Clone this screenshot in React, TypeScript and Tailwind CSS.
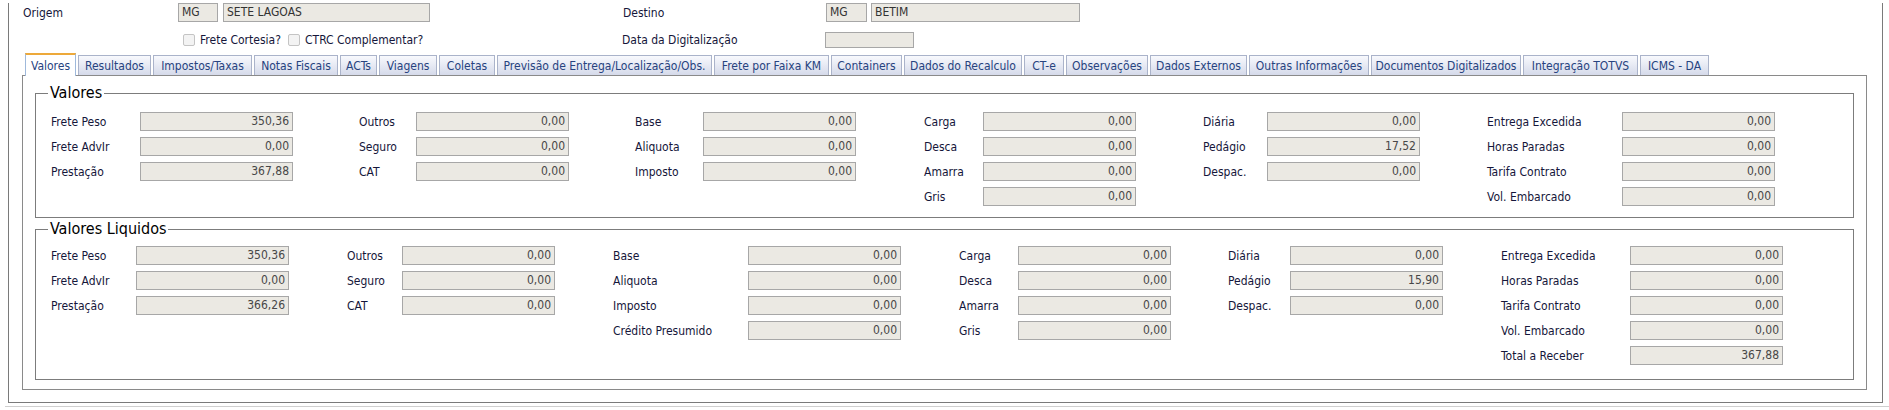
import React from 'react';

type Cell = [string, string] | null;

const tabs: { label: string; w: string }[] = [
  { label: 'Valores', w: 'w-[51px]' },
  { label: 'Resultados', w: 'w-[73px]' },
  { label: 'Impostos/Taxas', w: 'w-[99px]' },
  { label: 'Notas Fiscais', w: 'w-[84px]' },
  { label: 'ACTs', w: 'w-[37px]' },
  { label: 'Viagens', w: 'w-[58px]' },
  { label: 'Coletas', w: 'w-[56px]' },
  { label: 'Previsão de Entrega/Localização/Obs.', w: 'w-[215px]' },
  { label: 'Frete por Faixa KM', w: 'w-[115px]' },
  { label: 'Containers', w: 'w-[71px]' },
  { label: 'Dados do Recalculo', w: 'w-[118px]' },
  { label: 'CT-e', w: 'w-[40px]' },
  { label: 'Observações', w: 'w-[82px]' },
  { label: 'Dados Externos', w: 'w-[97px]' },
  { label: 'Outras Informações', w: 'w-[120px]' },
  { label: 'Documentos Digitalizados', w: 'w-[150px]' },
  { label: 'Integração TOTVS', w: 'w-[115px]' },
  { label: 'ICMS - DA', w: 'w-[69px]' },
];

const valores: Cell[][] = [
  [['Frete Peso', '350,36'], ['Outros', '0,00'], ['Base', '0,00'], ['Carga', '0,00'], ['Diária', '0,00'], ['Entrega Excedida', '0,00']],
  [['Frete AdvIr', '0,00'], ['Seguro', '0,00'], ['Aliquota', '0,00'], ['Desca', '0,00'], ['Pedágio', '17,52'], ['Horas Paradas', '0,00']],
  [['Prestação', '367,88'], ['CAT', '0,00'], ['Imposto', '0,00'], ['Amarra', '0,00'], ['Despac.', '0,00'], ['Tarifa Contrato', '0,00']],
  [null, null, null, ['Gris', '0,00'], null, ['Vol. Embarcado', '0,00']],
];

const liquidos: Cell[][] = [
  [['Frete Peso', '350,36'], ['Outros', '0,00'], ['Base', '0,00'], ['Carga', '0,00'], ['Diária', '0,00'], ['Entrega Excedida', '0,00']],
  [['Frete AdvIr', '0,00'], ['Seguro', '0,00'], ['Aliquota', '0,00'], ['Desca', '0,00'], ['Pedágio', '15,90'], ['Horas Paradas', '0,00']],
  [['Prestação', '366,26'], ['CAT', '0,00'], ['Imposto', '0,00'], ['Amarra', '0,00'], ['Despac.', '0,00'], ['Tarifa Contrato', '0,00']],
  [null, null, ['Crédito Presumido', '0,00'], ['Gris', '0,00'], null, ['Vol. Embarcado', '0,00']],
  [null, null, null, null, null, ['Total a Receber', '367,88']],
];

const ReadBox = ({ value, className = '' }: { value: string; className?: string }) => (
  <div className={`h-[19px] w-[153px] border border-[#a7a7a7] bg-[#ebe9e3] pr-[3px] text-right leading-[17px] text-[#474747] ${className}`}>
    {value}
  </div>
);

const FieldGrid = ({ rows, cols }: { rows: Cell[][]; cols: string }) => (
  <div className={`grid ${cols} gap-y-[6px]`}>
    {rows.map((row, r) =>
      row.map((cell, c) => (
        <React.Fragment key={`${r}-${c}`}>
          <div className="flex h-[19px] items-center whitespace-nowrap text-[#15163a]">{cell ? cell[0] : ''}</div>
          <div>{cell && <ReadBox value={cell[1]} />}</div>
        </React.Fragment>
      ))
    )}
  </div>
);

const Checkbox = () => (
  <span className="inline-block h-[12px] w-[12px] rounded-[2px] border border-[#c4c4c4] bg-[#f3f3f3]" />
);

export default function App() {
  return (
    <div
      className="h-[410px] w-[1889px] overflow-hidden bg-white text-[12px]"
      style={{ fontFamily: '"DejaVu Sans Condensed", "DejaVu Sans", Tahoma, sans-serif' }}
    >
      <div className="ml-[8px] w-[1875px] border-x border-b border-[#7a7a7a] pb-[12px]">
        {/* cabeçalho */}
        <div className="mt-[3px] flex h-[19px] items-center pl-[14px] text-[#15163a]">
          <div className="w-[155px]">Origem</div>
          <div className="h-[19px] w-[40px] border border-[#a7a7a7] bg-[#ebe9e3] pl-[3px] leading-[17px] text-[#333]">MG</div>
          <div className="ml-[5px] h-[19px] w-[207px] border border-[#a7a7a7] bg-[#ebe9e3] pl-[3px] leading-[17px] text-[#333]">SETE LAGOAS</div>
          <div className="ml-[193px] w-[203px]">Destino</div>
          <div className="h-[19px] w-[41px] border border-[#a7a7a7] bg-[#ebe9e3] pl-[3px] leading-[17px] text-[#333]">MG</div>
          <div className="ml-[4px] h-[19px] w-[209px] border border-[#a7a7a7] bg-[#ebe9e3] pl-[3px] leading-[17px] text-[#333]">BETIM</div>
        </div>
        <div className="mt-[9px] flex h-[17px] items-center pl-[14px] text-[#15163a]">
          <div className="w-[160px]" />
          <Checkbox />
          <span className="ml-[5px] w-[88px]">Frete Cortesia?</span>
          <Checkbox />
          <span className="ml-[5px]">CTRC Complementar?</span>
          <div className="ml-auto flex w-[1260px] items-center">
            <div className="w-[203px]">Data da Digitalização</div>
            <div className="h-[16px] w-[89px] border border-[#a7a7a7] bg-[#ebe9e3]" />
          </div>
        </div>

        {/* abas */}
        <div className="ml-[16px] mt-[5px] flex h-[23px] items-end gap-[2px]">
          {tabs.map((t, i) =>
            i === 0 ? (
              <div
                key={t.label}
                className={`${t.w} relative z-10 flex h-[23px] items-center justify-center border-x border-t-2 border-x-[#9fb9db] border-t-[#eda93a] bg-white text-[#27437f]`}
              >
                {t.label}
              </div>
            ) : (
              <div
                key={t.label}
                className={`${t.w} mb-[1px] flex h-[20px] items-center justify-center whitespace-nowrap border-x border-t border-[#aab3ca] bg-gradient-to-b from-[#f8f9fd] to-[#d5daea] text-[#27437f]`}
              >
                {t.label}
              </div>
            )
          )}
        </div>

        {/* painel */}
        <div className="ml-[13px] mt-[-1px] w-[1845px] border border-[#8a8a8a] px-[12px] pb-[9px] pt-[7px]">
          <fieldset className="border border-[#7c7c7c] pb-[11px] pl-[15px] pt-[9px]">
            <legend className="ml-[-3px] px-[2px] text-[16px] leading-[20px] text-black">Valores</legend>
            <FieldGrid
              rows={valores}
              cols="grid-cols-[89px_219px_57px_219px_68px_221px_59px_220px_64px_220px_135px_153px]"
            />
          </fieldset>
          <fieldset className="mt-[1px] border border-[#7c7c7c] pb-[14px] pl-[15px] pt-[7px]">
            <legend className="ml-[-3px] px-[2px] text-[16px] leading-[20px] text-black">Valores Liquidos</legend>
            <FieldGrid
              rows={liquidos}
              cols="grid-cols-[85px_211px_55px_211px_135px_211px_59px_210px_62px_211px_129px_153px]"
            />
          </fieldset>
        </div>
      </div>
      <div className="ml-[5px] mt-[3px] border-t border-[#cfcfcf]" />
    </div>
  );
}
